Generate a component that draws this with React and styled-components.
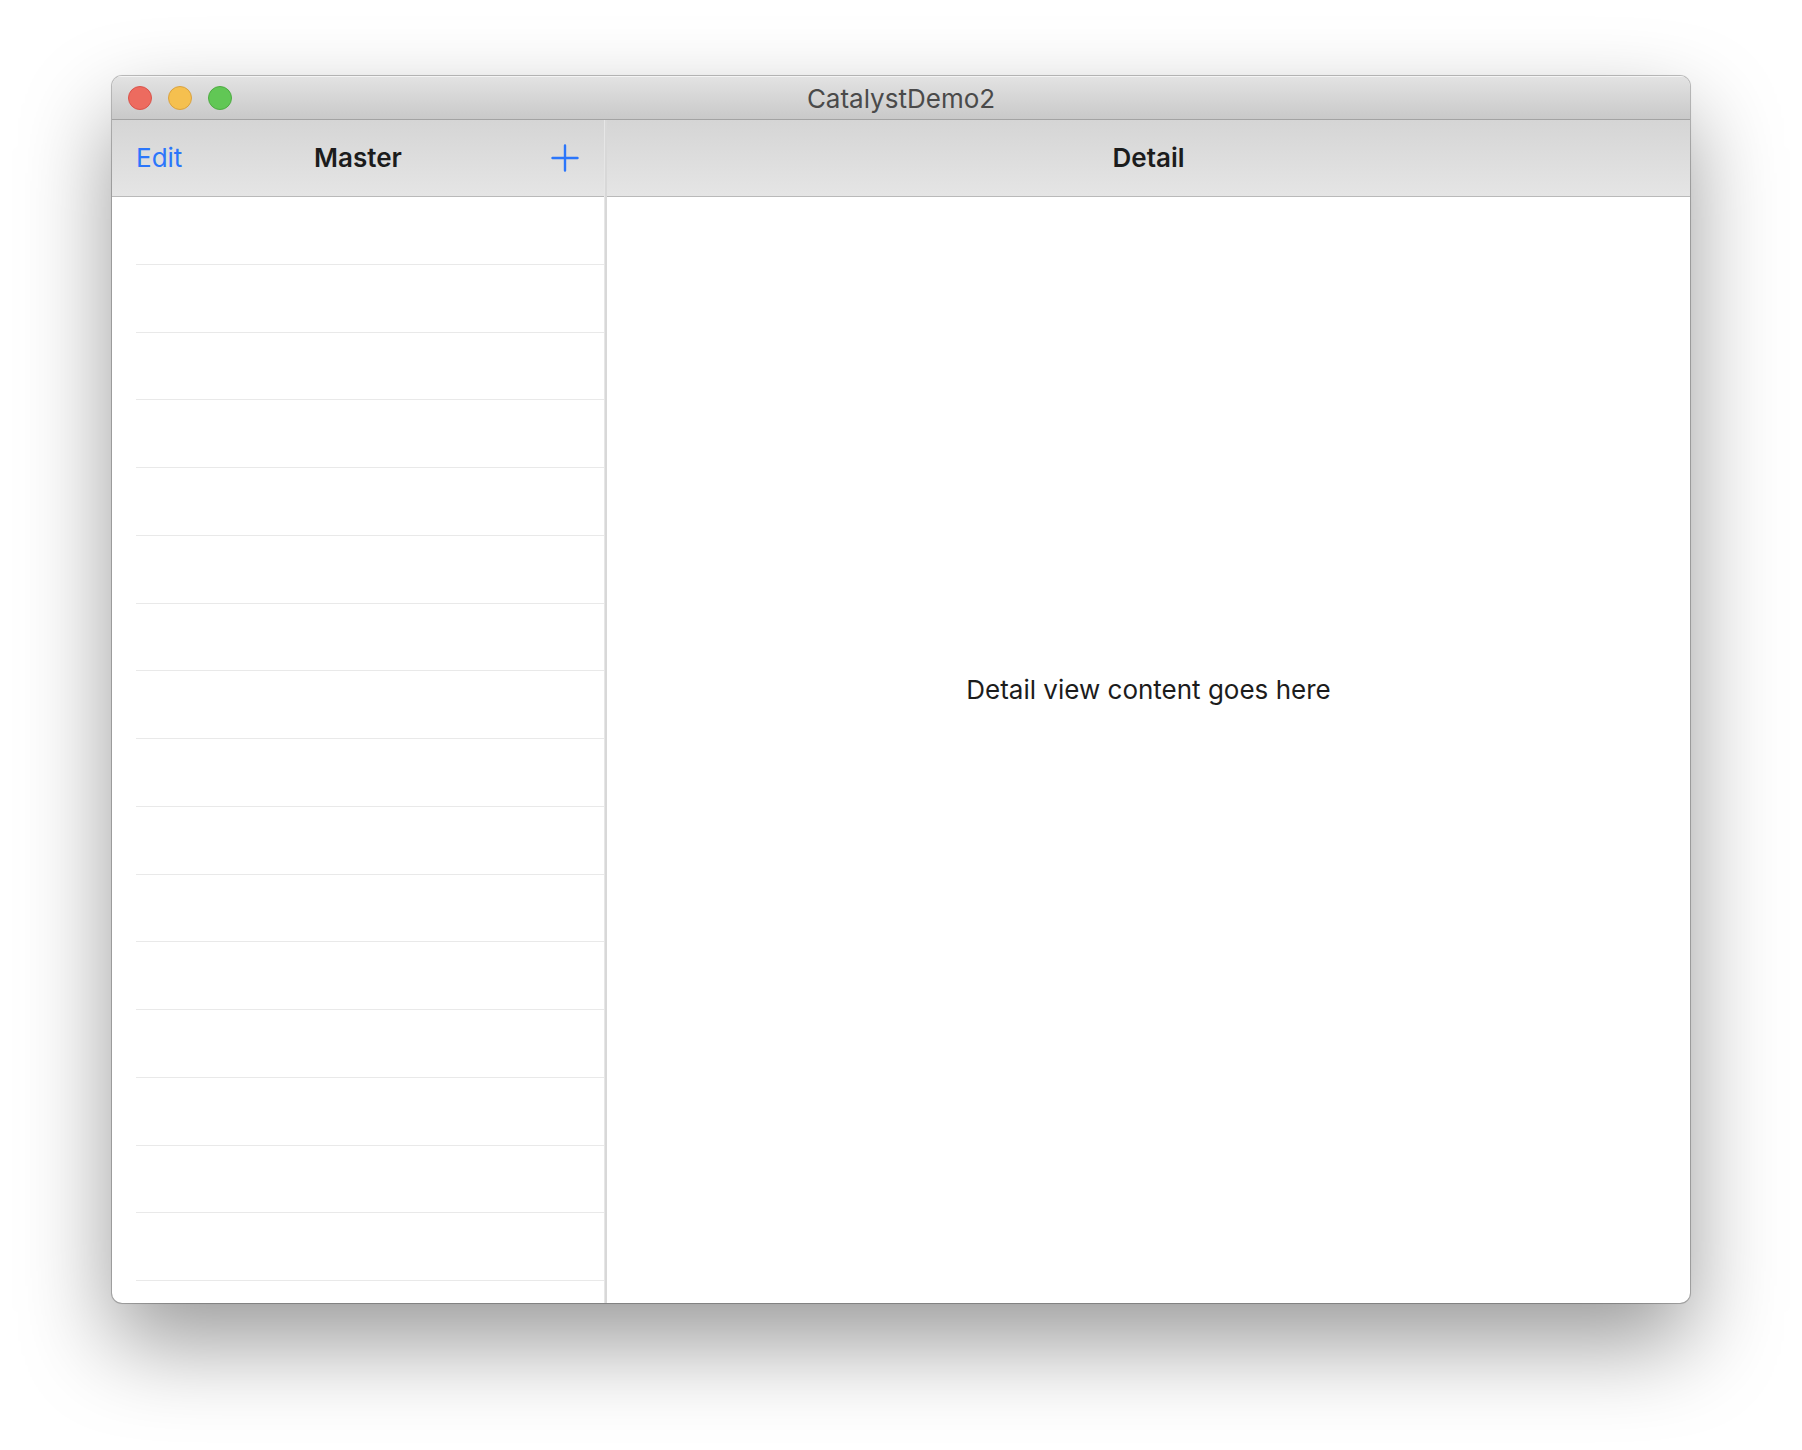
import React from 'react';
import styled, { createGlobalStyle } from 'styled-components';

const GlobalStyle = createGlobalStyle`
  * { box-sizing: border-box; }
  body {
    margin: 0;
    background: #fff;
    font-family: Inter, "Liberation Sans", sans-serif;
    color: #1c1c1c;
  }
`;

const Desktop = styled.div`
  display: flex;
  min-height: 100vh;
  padding: 76px 112px 147px;
`;

const Window = styled.main`
  flex: 1;
  min-width: 0;
  display: flex;
  flex-direction: column;
  overflow: hidden;
  border-radius: 10px;
  background: #fff;
  box-shadow:
    0 0 0 1px rgba(0, 0, 0, 0.2),
    0 0 2px rgba(0, 0, 0, 0.2),
    0 40px 90px rgba(0, 0, 0, 0.4);
`;

const TitleBar = styled.header`
  display: grid;
  grid-template-columns: 1fr auto 1fr;
  align-items: center;
  height: 44px;
  padding: 0 16px;
  background: linear-gradient(#e3e3e3, #c9c9c9);
  border-bottom: 1px solid #a3a3a3;
  box-shadow: inset 0 1px #f4f4f4;
`;

const Lights = styled.div`
  display: flex;
  gap: 16px;
`;

const Light = styled.button`
  width: 24px;
  height: 24px;
  padding: 0;
  border: 1px solid ${(p) => p.$edge};
  border-radius: 50%;
  background: ${(p) => p.$fill};
`;

const WindowTitle = styled.h1`
  margin: 0;
  padding-top: 2px;
  font-size: 26px;
  font-weight: 400;
  line-height: 32px;
  color: #4a4a4a;
`;

const Split = styled.div`
  flex: 1;
  display: grid;
  grid-template-columns: minmax(320px, 492fr) 3px 1083fr;
`;

const Divider = styled.div`
  background: linear-gradient(to right, #e6e6e6 1px, #d8d8d8 1px);
`;

const Pane = styled.section`
  display: flex;
  flex-direction: column;
  min-width: 0;
`;

const NavBar = styled.div`
  display: grid;
  grid-template-columns: 1fr auto 1fr;
  align-items: center;
  height: 77px;
  padding: 0 24px;
  background: linear-gradient(#d5d5d5, #e5e5e5);
  border-bottom: 1px solid #b9b9b9;
`;

const NavTitle = styled.h2`
  grid-column: 2;
  margin: 0;
  font-size: 26px;
  font-weight: 600;
  line-height: 32px;
`;

const NavButton = styled.button`
  display: flex;
  justify-self: ${(p) => p.$side};
  padding: 0;
  border: 0;
  background: none;
  font: inherit;
  font-size: 26px;
  line-height: 32px;
  color: #2b76fb;
`;

const List = styled.ul`
  flex: 1;
  display: grid;
  grid-auto-rows: 1fr;
  margin: 0;
  padding: 0 0 22px 24px;
  list-style: none;
`;

const Row = styled.li`
  border-bottom: 1px solid #e9e9e9;
`;

const DetailBody = styled.div`
  flex: 1;
  display: flex;
  align-items: center;
  justify-content: center;
  padding-bottom: 120px;
`;

const DetailText = styled.p`
  margin: 0;
  font-size: 26px;
  line-height: 32px;
`;

const rows = Array.from({ length: 16 }, (_, i) => i);

export default function App() {
  return (
    <Desktop>
      <GlobalStyle />
      <Window>
        <TitleBar>
          <Lights>
            <Light aria-label="Close" $fill="#ed6b5f" $edge="#d9544c" />
            <Light aria-label="Minimize" $fill="#f5c04f" $edge="#d9a240" />
            <Light aria-label="Zoom" $fill="#61c755" $edge="#4fab43" />
          </Lights>
          <WindowTitle>CatalystDemo2</WindowTitle>
        </TitleBar>
        <Split>
          <Pane>
            <NavBar>
              <NavButton $side="start">Edit</NavButton>
              <NavTitle>Master</NavTitle>
              <NavButton $side="end" aria-label="Add">
                <svg width="30" height="28" viewBox="0 0 30 28" fill="none" stroke="currentColor" strokeWidth="2.4" strokeLinecap="round">
                  <path d="M15 1.5v25M2.5 14h25" />
                </svg>
              </NavButton>
            </NavBar>
            <List>
              {rows.map((i) => (
                <Row key={i} />
              ))}
            </List>
          </Pane>
          <Divider />
          <Pane>
            <NavBar>
              <NavTitle>Detail</NavTitle>
            </NavBar>
            <DetailBody>
              <DetailText>Detail view content goes here</DetailText>
            </DetailBody>
          </Pane>
        </Split>
      </Window>
    </Desktop>
  );
}
